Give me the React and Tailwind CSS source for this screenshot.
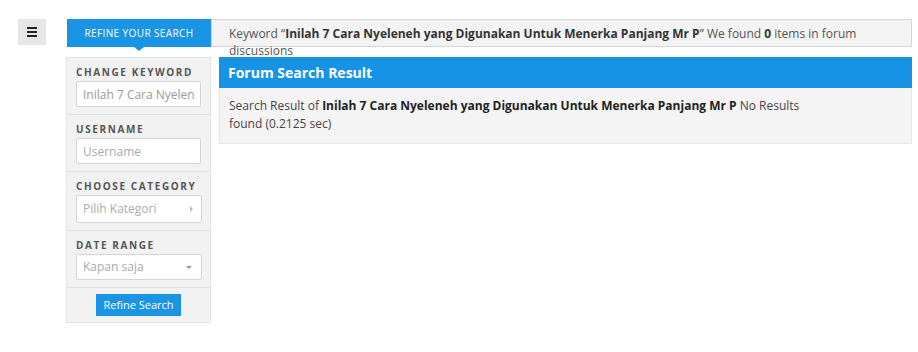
import React from 'react';

const font = { fontFamily: '"Open Sans", "Noto Sans", sans-serif' };
const keyword = 'Inilah 7 Cara Nyeleneh yang Digunakan Untuk Menerka Panjang Mr P';

// Blok filter di sidebar
function Field({ label, children, last }) {
  return (
    <div className={`pl-[9px] pr-[9px] pt-[8px] pb-[7px] ${last ? '' : 'border-b border-[#e0e0e0]'}`}>
      <div className="h-[13px] leading-[13px] mb-[2px] text-[10px] font-bold tracking-[1.6px] text-[#555]">{label}</div>
      {children}
    </div>
  );
}

export default function App() {
  return (
    <div className="min-h-[352px] bg-white text-[12px] text-[#444]" style={font}>
      <div className="flex pt-[19px]">
        <div className="ml-[18px] w-[28px] h-[26px] bg-[#e6e6e6] flex items-center justify-center">
          <div className="flex flex-col gap-[2px]">
            <div className="w-[10px] h-[2px] bg-[#222]" />
            <div className="w-[10px] h-[2px] bg-[#222]" />
            <div className="w-[10px] h-[2px] bg-[#222]" />
          </div>
        </div>

        <div className="ml-[20px] w-[846px]">
          {/* верхняя полоса */}
          <div className="flex h-[28px]">
            <div className="relative ml-[1px] w-[144px] h-[28px] bg-[#1a95e4] text-white text-[10px] tracking-[0.4px] flex items-center justify-center">
              REFINE YOUR SEARCH
              <div className="absolute left-1/2 -translate-x-1/2 top-[28px] w-0 h-0 border-l-[5px] border-r-[5px] border-t-[4px] border-l-transparent border-r-transparent border-t-[#1a95e4]" />
            </div>
            <div className="flex-1 h-[28px] bg-[#f3f3f3] border border-[#d6d6d6] pl-[17px] pr-[27px] pt-[5px] leading-[17px] text-[#555]">
              Keyword “<b className="text-[#333]">{keyword}</b>” We found <b className="text-[#333]">0</b> items in forum discussions
            </div>
          </div>

          <div className="flex mt-[10px] items-start">
            {/* сайдбар */}
            <div className="w-[145px] bg-[#f2f2f2] border border-[#e3e3e3]">
              <Field label="CHANGE KEYWORD">
                <input
                  readOnly
                  value={keyword}
                  className="w-[125px] h-[26px] bg-white border border-[#d4d4d4] rounded-[2px] px-[6px] text-[12px] text-[#9a9a9a] outline-none"
                  style={font}
                />
              </Field>
              <Field label="USERNAME">
                <input
                  readOnly
                  placeholder="Username"
                  className="w-[125px] h-[26px] bg-white border border-[#d4d4d4] rounded-[2px] px-[6px] text-[12px] placeholder-[#aaa] outline-none"
                  style={font}
                />
              </Field>
              <Field label="CHOOSE CATEGORY">
                <div className="w-[126px] h-[28px] bg-white border border-[#d4d4d4] rounded-[2px] pl-[6px] pr-[8px] flex items-center justify-between text-[#aaa]">
                  <span>Pilih Kategori</span>
                  <span className="w-0 h-0 border-t-[3px] border-b-[3px] border-l-[3px] border-t-transparent border-b-transparent border-l-[#bbb]" />
                </div>
              </Field>
              <Field label="DATE RANGE">
                <div className="w-[126px] h-[26px] bg-white border border-[#d4d4d4] rounded-[2px] pl-[6px] pr-[9px] flex items-center justify-between text-[#aaa]">
                  <span>Kapan saja</span>
                  <span className="w-0 h-0 border-l-[3px] border-r-[3px] border-t-[3px] border-l-transparent border-r-transparent border-t-[#999]" />
                </div>
              </Field>
              <div className="pt-[6px] pb-[6px] flex justify-center">
                <button className="w-[85px] h-[22px] bg-[#1a95e4] text-white text-[11px]" style={font}>Refine Search</button>
              </div>
            </div>

            {/* результат */}
            <div className="ml-[8px] flex-1">
              <div className="h-[31px] bg-[#1793e6] text-white text-[14px] font-bold pl-[9px] flex items-center">Forum Search Result</div>
              <div className="bg-[#f4f4f4] border border-t-0 border-[#e6e6e6] pl-[9px] pt-[9px] pb-[10px] leading-[18px]">
                <div className="w-[575px]">
                  Search Result of <b className="text-[#222]">{keyword}</b> No Results found (0.2125 sec)
                </div>
              </div>
            </div>
          </div>
        </div>
      </div>
    </div>
  );
}
